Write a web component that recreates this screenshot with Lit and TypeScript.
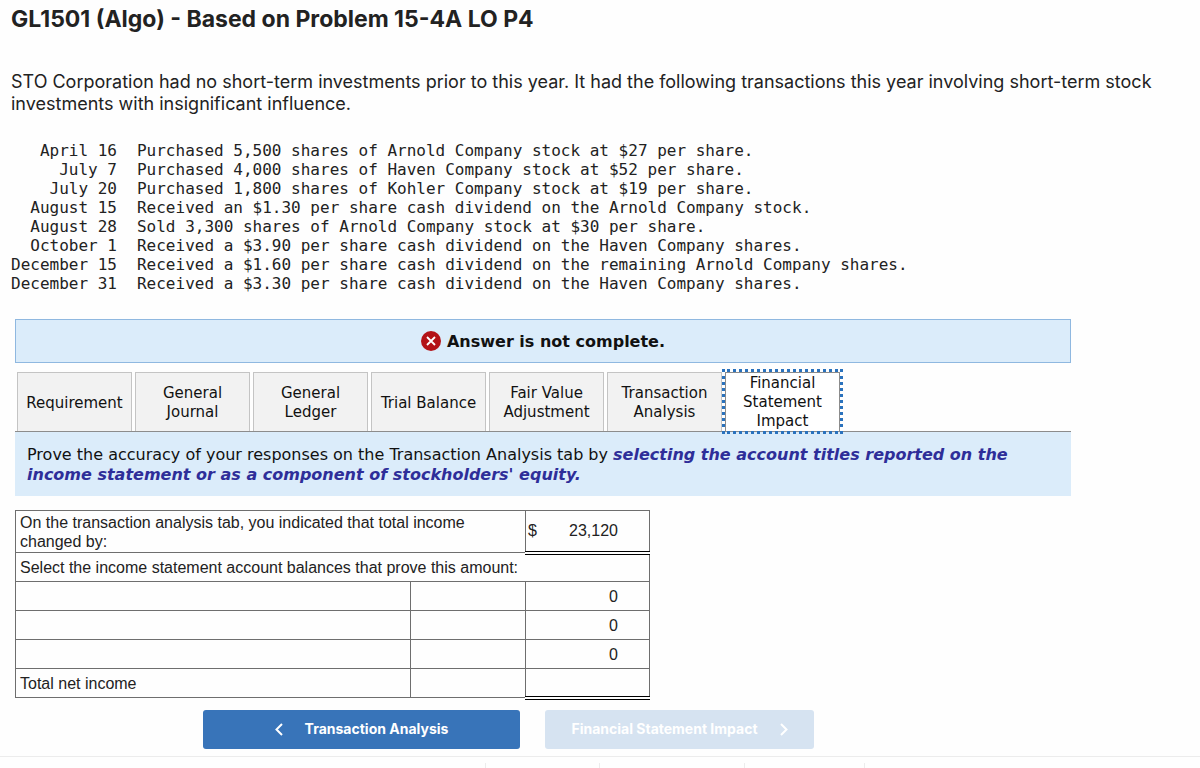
import { LitElement, html, css } from "lit";
import { customElement, property, state } from "lit/decorators.js";
import { classMap } from "lit/directives/class-map.js";

const TRANSACTIONS: [string, string][] = [
  ["April 16", "Purchased 5,500 shares of Arnold Company stock at $27 per share."],
  ["July 7", "Purchased 4,000 shares of Haven Company stock at $52 per share."],
  ["July 20", "Purchased 1,800 shares of Kohler Company stock at $19 per share."],
  ["August 15", "Received an $1.30 per share cash dividend on the Arnold Company stock."],
  ["August 28", "Sold 3,300 shares of Arnold Company stock at $30 per share."],
  ["October 1", "Received a $3.90 per share cash dividend on the Haven Company shares."],
  ["December 15", "Received a $1.60 per share cash dividend on the remaining Arnold Company shares."],
  ["December 31", "Received a $3.30 per share cash dividend on the Haven Company shares."],
];

const TABS = [
  "Requirement",
  "General Journal",
  "General Ledger",
  "Trial Balance",
  "Fair Value Adjustment",
  "Transaction Analysis",
  "Financial Statement Impact",
];

@customElement("transaction-list")
class TransactionList extends LitElement {
  static styles = css`
    :host {
      display: block;
    }
    .list {
      border-collapse: collapse;
      font: 16px/19px "DejaVu Sans Mono", monospace;
      color: #222;
    }
    .date,
    .text {
      padding: 0;
      font-weight: 400;
      white-space: nowrap;
    }
    .date {
      text-align: right;
      padding-right: 20px;
    }
    .text {
      text-align: left;
    }
  `;

  render() {
    return html`
      <table class="list">
        <tbody>
          ${TRANSACTIONS.map(
            ([date, text]) => html`<tr>
              <th class="date" scope="row">${date}</th>
              <td class="text">${text}</td>
            </tr>`
          )}
        </tbody>
      </table>
    `;
  }
}

@customElement("tab-strip")
class TabStrip extends LitElement {
  @property({ type: Number }) active = 0;

  static styles = css`
    :host {
      display: block;
    }
    .strip {
      display: flex;
      gap: 3px;
      padding: 0 2px;
      border-bottom: 1px solid #8c8c8c;
    }
    .tab {
      box-sizing: border-box;
      flex: 0 1 115px;
      height: 59px;
      margin: 0;
      padding: 2px 8px 0;
      border: 1px solid #c4c4c4;
      border-bottom: 0;
      background: #f2f2f2;
      color: #111;
      font: 15px/19px "DejaVu Sans", sans-serif;
      text-align: center;
      cursor: pointer;
    }
    .tab.active {
      padding-top: 0;
      background: #fff;
      border-color: #8c8c8c;
      outline: 3px dotted #2a72bd;
      z-index: 1;
    }
  `;

  private pick(index: number) {
    this.dispatchEvent(new CustomEvent("tab-change", { detail: index }));
  }

  render() {
    return html`
      <div class="strip" role="tablist">
        ${TABS.map(
          (label, i) => html`<button
            class=${classMap({ tab: true, active: i === this.active })}
            role="tab"
            aria-selected=${i === this.active ? "true" : "false"}
            @click=${() => this.pick(i)}
          >${label}</button>`
        )}
      </div>
    `;
  }
}

@customElement("income-proof")
class IncomeProof extends LitElement {
  static styles = css`
    :host {
      display: block;
    }
    .proof {
      width: 100%;
      max-width: 635px;
      border-collapse: collapse;
      table-layout: fixed;
      font: 16px/19px "Liberation Sans", Arial, sans-serif;
      color: #222;
    }
    .name {
      width: 395px;
    }
    .note {
      width: 115px;
    }
    .cell {
      box-sizing: border-box;
      height: 29px;
      padding: 0 4px;
      border: 1px solid #6e6e6e;
      text-align: left;
      font-weight: 400;
    }
    .top {
      height: 42px;
      padding-top: 2px;
      padding-bottom: 1px;
      vertical-align: top;
    }
    .amount {
      padding: 0 31px 0 2px;
      text-align: right;
    }
    .money {
      display: flex;
      justify-content: space-between;
    }
    .total {
      border-bottom: 4px double #000;
    }
    .sum {
      border-top: 1px solid #000;
    }
    .choice {
      display: block;
      width: 100%;
      height: 22px;
      margin: 0;
      padding: 0;
      border: 0;
      appearance: none;
      background: transparent;
      font: inherit;
      color: inherit;
    }
  `;

  render() {
    return html`
      <table class="proof">
        <colgroup>
          <col class="name" />
          <col class="note" />
          <col />
        </colgroup>
        <tbody>
          <tr>
            <th class="cell top" scope="row" colspan="2">
              On the transaction analysis tab, you indicated that total income changed by:
            </th>
            <td class="cell amount total">
              <div class="money"><span>$</span><span>23,120</span></div>
            </td>
          </tr>
          <tr>
            <th class="cell" colspan="3">
              Select the income statement account balances that prove this amount:
            </th>
          </tr>
          ${[0, 0, 0].map(
            (value, i) => html`<tr>
              <td class="cell">
                <select class="choice" aria-label="Account ${i + 1}">
                  <option></option>
                </select>
              </td>
              <td class="cell"></td>
              <td class="cell amount">${value}</td>
            </tr>`
          )}
          <tr>
            <th class="cell" scope="row">Total net income</th>
            <td class="cell"></td>
            <td class="cell amount sum total"></td>
          </tr>
        </tbody>
      </table>
    `;
  }
}

@customElement("app-root")
class AppRoot extends LitElement {
  @state() private tab = 6;

  static styles = css`
    :host {
      display: block;
      min-height: 100vh;
      overflow: hidden;
      background: #fefefe;
      color: #222;
    }
    .intro {
      padding: 5px 12px 0 11px;
      font-family: Inter, sans-serif;
    }
    .title {
      margin: 0;
      font-size: 23px;
      line-height: 28px;
      font-weight: 700;
    }
    .lead {
      margin: 38px 0 26px;
      font-size: 18px;
      line-height: 22px;
    }
    .work {
      max-width: 1056px;
      padding: 26px 0 0;
      margin: 0 15px;
      font-family: "DejaVu Sans", sans-serif;
      color: #111;
    }
    .status {
      display: flex;
      align-items: center;
      justify-content: center;
      gap: 6px;
      box-sizing: border-box;
      min-height: 44px;
      margin-bottom: 9px;
      border: 1px solid #8fb8e0;
      background: #dbecfa;
      font-size: 16px;
      font-weight: 700;
    }
    .cross {
      width: 20px;
      height: 20px;
    }
    .prompt {
      margin: 0 0 14px;
      padding: 13px 12px 11px;
      background: #dbecfa;
      font-size: 16px;
      line-height: 20px;
    }
    .task {
      color: #2e2e99;
      font-style: italic;
      font-weight: 700;
    }
    .steps {
      display: flex;
      gap: 25px;
      padding: 10px 0 7px 188px;
    }
    .step {
      display: flex;
      align-items: center;
      justify-content: center;
      gap: 22px;
      height: 39px;
      padding: 0;
      border: 0;
      border-radius: 3px;
      background: #3874b9;
      color: #fff;
      font: 700 14px/20px Inter, sans-serif;
      cursor: pointer;
    }
    .back {
      flex: 0 1 317px;
    }
    .next {
      flex: 0 1 269px;
    }
    .step:disabled {
      background: #d6e3f1;
      cursor: default;
    }
    .chevron {
      width: 8px;
      height: 13px;
      fill: none;
      stroke: currentColor;
      stroke-width: 2;
    }
    .footer {
      display: grid;
      grid-template-columns: 114px 145px 121px;
      border-top: 1px solid #ececec;
      padding: 6px 0 0 485px;
    }
    .slot {
      height: 5px;
      border-left: 1px solid #ececec;
    }
    .slot:last-child {
      border-right: 1px solid #ececec;
    }
  `;

  render() {
    return html`
      <header class="intro">
        <h1 class="title">GL1501 (Algo) - Based on Problem 15-4A LO P4</h1>
        <p class="lead">
          STO Corporation had no short-term investments prior to this year. It had the following
          transactions this year involving short-term stock investments with insignificant
          influence.
        </p>
        <transaction-list></transaction-list>
      </header>
      <main class="work">
        <div class="status" role="status">
          <svg class="cross" viewBox="0 0 20 20" aria-hidden="true">
            <circle cx="10" cy="10" r="10" fill="#b31217" />
            <path d="M6 6l8 8M14 6l-8 8" stroke="#fff" stroke-width="1.8" />
          </svg>
          <span>Answer is not complete.</span>
        </div>
        <tab-strip
          .active=${this.tab}
          @tab-change=${(e: CustomEvent<number>) => (this.tab = e.detail)}
        ></tab-strip>
        <p class="prompt">
          Prove the accuracy of your responses on the Transaction Analysis tab by
          <span class="task"
            >selecting the account titles reported on the income statement or as a component of
            stockholders' equity.</span
          >
        </p>
        <income-proof></income-proof>
        <nav class="steps">
          <button class="step back">
            <svg class="chevron" viewBox="0 0 8 13" aria-hidden="true">
              <path d="M7 1L1.5 6.5 7 12" />
            </svg>
            Transaction Analysis
          </button>
          <button class="step next" disabled>
            Financial Statement Impact
            <svg class="chevron" viewBox="0 0 8 13" aria-hidden="true">
              <path d="M1 1l5.500 5.500L1 12" />
            </svg>
          </button>
        </nav>
      </main>
      <footer class="footer">
        <span class="slot"></span><span class="slot"></span><span class="slot"></span>
      </footer>
    `;
  }
}
